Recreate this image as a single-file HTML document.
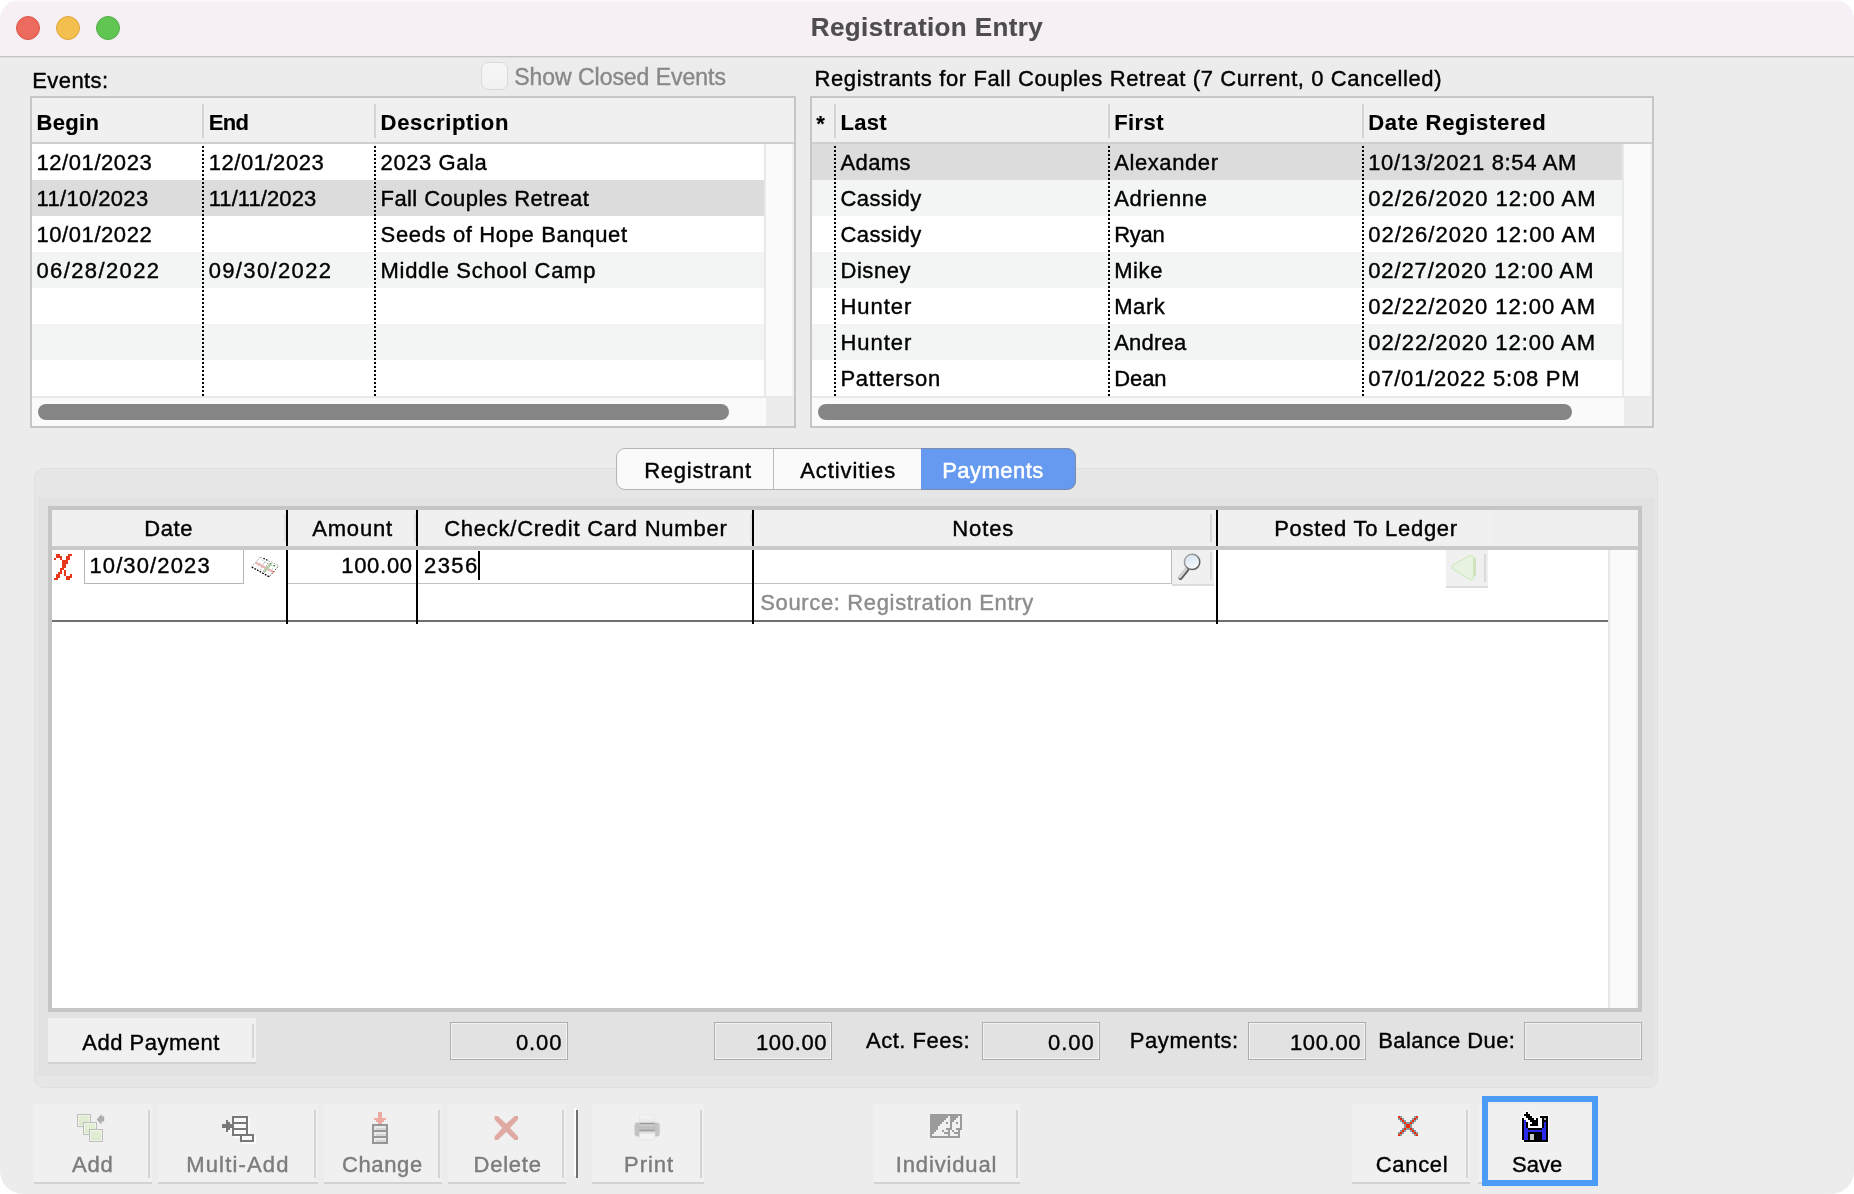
<!DOCTYPE html>
<html lang="en">
<head>
<meta charset="utf-8">
<title>Registration Entry</title>
<style>
*{box-sizing:border-box;margin:0;padding:0}
html,body{width:1854px;height:1194px;overflow:hidden;background:#fff}
body{font-family:"Liberation Sans",sans-serif;font-size:22px;color:#000;position:relative}
.a{position:absolute}
.t{white-space:nowrap;-webkit-text-stroke:0.4px currentColor}
.tb{-webkit-text-stroke:0.15px currentColor}
#win{will-change:transform;left:0;top:0;width:1854px;height:1194px;border-radius:20px 20px 23px 23px;background:#ececec;overflow:hidden}
.tl{width:24px;height:24px;border-radius:50%;top:16px}
.dot{width:2px;background:repeating-linear-gradient(to bottom,transparent 0,transparent 2px,#000 2px,#000 4px)}
.thumb{background:#858585;border-radius:8px;height:16px}
</style>
</head>
<body>
<div id="win" class="a">
<div class="a" style="left:0px;top:0px;width:1854px;height:56px;background:#f6f0f6;"></div>
<div class="a" style="left:0px;top:0px;width:1854px;height:2px;background:linear-gradient(rgba(255,255,255,.85),rgba(255,255,255,0));"></div>
<div class="a" style="left:0px;top:56px;width:1854px;height:1px;background:#c4c4c4;"></div>
<div class="a" style="left:0px;top:57px;width:1854px;height:1px;background:#dedede;"></div>
<div class="a tl" style="left:16px;background:#ec6a5e;border:1px solid #d9574b"></div>
<div class="a tl" style="left:56px;background:#f4bf4f;border:1px solid #dca73c"></div>
<div class="a tl" style="left:96px;background:#61c554;border:1px solid #50ad43"></div>
<div class="a t tb" style="left:810.80px;top:9.59px;font-size:26px;line-height:34px;height:34px;letter-spacing:0.388px;font-weight:bold;color:#4f4c4f;">Registration Entry</div>
<div class="a t" style="left:32.20px;top:65.88px;font-size:22px;line-height:29px;height:29px;letter-spacing:0.433px;">Events:</div>
<div class="a" style="left:480.5px;top:62px;width:27px;height:27.5px;background:linear-gradient(#f6f6f6,#f1f1f1);border:1px solid #d9d9d9;border-radius:7px"></div>
<div class="a t" style="left:514.20px;top:61.73px;font-size:23px;line-height:30px;height:30px;letter-spacing:-0.029px;color:#888888;">Show Closed Events</div>
<div class="a" style="left:30px;top:96px;width:766px;height:332px;background:#fff;border:2px solid #c6c6c6"></div>
<div class="a" style="left:32px;top:98px;width:762px;height:44px;background:#f0f0f0;"></div>
<div class="a" style="left:32px;top:142px;width:762px;height:2px;background:#cfcfcf;"></div>
<div class="a" style="left:32px;top:144px;width:732px;height:36px;background:#fff;"></div>
<div class="a" style="left:32px;top:180px;width:732px;height:36px;background:#dcdcdc;"></div>
<div class="a" style="left:32px;top:216px;width:732px;height:36px;background:#fff;"></div>
<div class="a" style="left:32px;top:252px;width:732px;height:36px;background:#f3f5f5;"></div>
<div class="a" style="left:32px;top:288px;width:732px;height:36px;background:#fff;"></div>
<div class="a" style="left:32px;top:324px;width:732px;height:36px;background:#f3f5f5;"></div>
<div class="a" style="left:32px;top:360px;width:732px;height:36px;background:#fff;"></div>
<div class="a" style="left:202px;top:104px;width:2px;height:34px;background:#d4d4d4;"></div>
<div class="a dot" style="left:202px;top:144px;height:252px"></div>
<div class="a" style="left:374px;top:104px;width:2px;height:34px;background:#d4d4d4;"></div>
<div class="a dot" style="left:374px;top:144px;height:252px"></div>
<div class="a" style="left:764px;top:144px;width:30px;height:253px;background:#fafafa;border-left:2px solid #e9e9e9;border-right:2px solid #f0f0f0"></div>
<div class="a" style="left:32px;top:396px;width:762px;height:30px;background:#fafafa;border-top:2px solid #e9e9e9"></div>
<div class="a" style="left:766px;top:398px;width:28px;height:28px;background:#ececec;"></div>
<div class="a t tb" style="left:36.50px;top:107.58px;font-size:22px;line-height:29px;height:29px;letter-spacing:0.350px;font-weight:bold;">Begin</div>
<div class="a t tb" style="left:208.70px;top:107.58px;font-size:22px;line-height:29px;height:29px;letter-spacing:-0.650px;font-weight:bold;">End</div>
<div class="a t tb" style="left:380.60px;top:107.58px;font-size:22px;line-height:29px;height:29px;letter-spacing:0.680px;font-weight:bold;">Description</div>
<div class="a t" style="left:36.50px;top:147.88px;font-size:22px;line-height:29px;height:29px;letter-spacing:0.567px;">12/01/2023</div>
<div class="a t" style="left:208.70px;top:147.88px;font-size:22px;line-height:29px;height:29px;letter-spacing:0.544px;">12/01/2023</div>
<div class="a t" style="left:380.60px;top:147.88px;font-size:22px;line-height:29px;height:29px;letter-spacing:0.562px;">2023 Gala</div>
<div class="a t" style="left:36.50px;top:183.88px;font-size:22px;line-height:29px;height:29px;letter-spacing:0.356px;">11/10/2023</div>
<div class="a t" style="left:208.70px;top:183.88px;font-size:22px;line-height:29px;height:29px;letter-spacing:0.078px;">11/11/2023</div>
<div class="a t" style="left:380.60px;top:183.88px;font-size:22px;line-height:29px;height:29px;letter-spacing:0.405px;">Fall Couples Retreat</div>
<div class="a t" style="left:36.50px;top:219.88px;font-size:22px;line-height:29px;height:29px;letter-spacing:0.567px;">10/01/2022</div>
<div class="a t" style="left:380.60px;top:219.88px;font-size:22px;line-height:29px;height:29px;letter-spacing:0.640px;">Seeds of Hope Banquet</div>
<div class="a t" style="left:36.50px;top:255.88px;font-size:22px;line-height:29px;height:29px;letter-spacing:1.378px;">06/28/2022</div>
<div class="a t" style="left:208.70px;top:255.88px;font-size:22px;line-height:29px;height:29px;letter-spacing:1.356px;">09/30/2022</div>
<div class="a t" style="left:380.60px;top:255.88px;font-size:22px;line-height:29px;height:29px;letter-spacing:0.694px;">Middle School Camp</div>
<div class="a thumb" style="left:38px;top:404px;width:691px"></div>
<div class="a t" style="left:814.50px;top:63.88px;font-size:22px;line-height:29px;height:29px;letter-spacing:0.607px;">Registrants for Fall Couples Retreat (7 Current, 0 Cancelled)</div>
<div class="a" style="left:810px;top:96px;width:844px;height:332px;background:#fff;border:2px solid #c6c6c6"></div>
<div class="a" style="left:812px;top:98px;width:840px;height:44px;background:#f0f0f0;"></div>
<div class="a" style="left:812px;top:142px;width:840px;height:2px;background:#cfcfcf;"></div>
<div class="a" style="left:812px;top:144px;width:810px;height:36px;background:#dcdcdc;"></div>
<div class="a" style="left:812px;top:180px;width:810px;height:36px;background:#f3f5f5;"></div>
<div class="a" style="left:812px;top:216px;width:810px;height:36px;background:#fff;"></div>
<div class="a" style="left:812px;top:252px;width:810px;height:36px;background:#f3f5f5;"></div>
<div class="a" style="left:812px;top:288px;width:810px;height:36px;background:#fff;"></div>
<div class="a" style="left:812px;top:324px;width:810px;height:36px;background:#f3f5f5;"></div>
<div class="a" style="left:812px;top:360px;width:810px;height:36px;background:#fff;"></div>
<div class="a" style="left:834px;top:104px;width:2px;height:34px;background:#d4d4d4;"></div>
<div class="a dot" style="left:834px;top:144px;height:252px"></div>
<div class="a" style="left:1108px;top:104px;width:2px;height:34px;background:#d4d4d4;"></div>
<div class="a dot" style="left:1108px;top:144px;height:252px"></div>
<div class="a" style="left:1362px;top:104px;width:2px;height:34px;background:#d4d4d4;"></div>
<div class="a dot" style="left:1362px;top:144px;height:252px"></div>
<div class="a" style="left:1622px;top:144px;width:30px;height:253px;background:#fafafa;border-left:2px solid #e9e9e9;border-right:2px solid #f0f0f0"></div>
<div class="a" style="left:812px;top:396px;width:840px;height:30px;background:#fafafa;border-top:2px solid #e9e9e9"></div>
<div class="a" style="left:1624px;top:398px;width:28px;height:28px;background:#ececec;"></div>
<div class="a t tb" style="left:816.20px;top:108.88px;font-size:22px;line-height:29px;height:29px;letter-spacing:0.000px;font-weight:bold;">*</div>
<div class="a t tb" style="left:840.50px;top:107.58px;font-size:22px;line-height:29px;height:29px;letter-spacing:0.300px;font-weight:bold;">Last</div>
<div class="a t tb" style="left:1114.20px;top:107.58px;font-size:22px;line-height:29px;height:29px;letter-spacing:0.425px;font-weight:bold;">First</div>
<div class="a t tb" style="left:1368.20px;top:107.58px;font-size:22px;line-height:29px;height:29px;letter-spacing:0.714px;font-weight:bold;">Date Registered</div>
<div class="a t" style="left:840.50px;top:147.88px;font-size:22px;line-height:29px;height:29px;letter-spacing:0.400px;">Adams</div>
<div class="a t" style="left:1114.20px;top:147.88px;font-size:22px;line-height:29px;height:29px;letter-spacing:0.588px;">Alexander</div>
<div class="a t" style="left:1368.20px;top:147.88px;font-size:22px;line-height:29px;height:29px;letter-spacing:0.659px;">10/13/2021 8:54 AM</div>
<div class="a t" style="left:840.50px;top:183.88px;font-size:22px;line-height:29px;height:29px;letter-spacing:0.417px;">Cassidy</div>
<div class="a t" style="left:1114.20px;top:183.88px;font-size:22px;line-height:29px;height:29px;letter-spacing:0.671px;">Adrienne</div>
<div class="a t" style="left:1368.20px;top:183.88px;font-size:22px;line-height:29px;height:29px;letter-spacing:1.011px;">02/26/2020 12:00 AM</div>
<div class="a t" style="left:840.50px;top:219.88px;font-size:22px;line-height:29px;height:29px;letter-spacing:0.417px;">Cassidy</div>
<div class="a t" style="left:1114.20px;top:219.88px;font-size:22px;line-height:29px;height:29px;letter-spacing:-0.267px;">Ryan</div>
<div class="a t" style="left:1368.20px;top:219.88px;font-size:22px;line-height:29px;height:29px;letter-spacing:1.011px;">02/26/2020 12:00 AM</div>
<div class="a t" style="left:840.50px;top:255.88px;font-size:22px;line-height:29px;height:29px;letter-spacing:0.540px;">Disney</div>
<div class="a t" style="left:1114.20px;top:255.88px;font-size:22px;line-height:29px;height:29px;letter-spacing:0.600px;">Mike</div>
<div class="a t" style="left:1368.20px;top:255.88px;font-size:22px;line-height:29px;height:29px;letter-spacing:0.894px;">02/27/2020 12:00 AM</div>
<div class="a t" style="left:840.50px;top:291.88px;font-size:22px;line-height:29px;height:29px;letter-spacing:0.960px;">Hunter</div>
<div class="a t" style="left:1114.20px;top:291.88px;font-size:22px;line-height:29px;height:29px;letter-spacing:0.567px;">Mark</div>
<div class="a t" style="left:1368.20px;top:291.88px;font-size:22px;line-height:29px;height:29px;letter-spacing:0.983px;">02/22/2020 12:00 AM</div>
<div class="a t" style="left:840.50px;top:327.88px;font-size:22px;line-height:29px;height:29px;letter-spacing:0.960px;">Hunter</div>
<div class="a t" style="left:1114.20px;top:327.88px;font-size:22px;line-height:29px;height:29px;letter-spacing:0.240px;">Andrea</div>
<div class="a t" style="left:1368.20px;top:327.88px;font-size:22px;line-height:29px;height:29px;letter-spacing:0.983px;">02/22/2020 12:00 AM</div>
<div class="a t" style="left:840.50px;top:363.88px;font-size:22px;line-height:29px;height:29px;letter-spacing:0.688px;">Patterson</div>
<div class="a t" style="left:1114.20px;top:363.88px;font-size:22px;line-height:29px;height:29px;letter-spacing:-0.067px;">Dean</div>
<div class="a t" style="left:1368.20px;top:363.88px;font-size:22px;line-height:29px;height:29px;letter-spacing:0.782px;">07/01/2022 5:08 PM</div>
<div class="a thumb" style="left:818px;top:404px;width:754px"></div>
<div class="a" style="left:34px;top:468px;width:1624px;height:620px;background:#e6e6e6;border:1px solid #dfdfdf;border-radius:10px"></div>
<div class="a" style="left:38px;top:498px;width:1616px;height:578px;background:#e2e2e2;"></div>
<div class="a" style="left:616px;top:448px;width:460px;height:42px;background:#fafafa;border:1px solid #b4b4b4;border-radius:9px"></div>
<div class="a" style="left:773px;top:449px;width:1px;height:40px;background:#b9b9b9;"></div>
<div class="a" style="left:921px;top:448px;width:155px;height:42px;background:#659af0;border:1px solid rgba(140,130,120,.55);border-left:none;border-radius:0 9px 9px 0"></div>
<div class="a t" style="left:644.20px;top:455.88px;font-size:22px;line-height:29px;height:29px;letter-spacing:0.744px;">Registrant</div>
<div class="a t" style="left:800.20px;top:455.88px;font-size:22px;line-height:29px;height:29px;letter-spacing:0.911px;">Activities</div>
<div class="a t" style="left:942.20px;top:455.88px;font-size:22px;line-height:29px;height:29px;letter-spacing:0.457px;color:#fff;text-shadow:0 0 1px rgba(255,255,255,.55);">Payments</div>
<div class="a" style="left:48px;top:506px;width:1594px;height:506px;background:#fff;border:4px solid #c5c5c5"></div>
<div class="a" style="left:52px;top:510px;width:1586px;height:36px;background:#f0f0f0;"></div>
<div class="a" style="left:1492px;top:510px;width:146px;height:36px;background:#eeeeee;"></div>
<div class="a" style="left:1608px;top:550px;width:30px;height:458px;background:#fafafa;border-left:2px solid #e8e8e8;border-right:2px solid #f0f0f0"></div>
<div class="a" style="left:284px;top:514px;width:1.5px;height:28px;background:#e3e3e3;"></div>
<div class="a" style="left:414px;top:514px;width:1.5px;height:28px;background:#e3e3e3;"></div>
<div class="a" style="left:750px;top:514px;width:1.5px;height:28px;background:#e3e3e3;"></div>
<div class="a" style="left:1210px;top:514px;width:2px;height:28px;background:#d8d8d8;"></div>
<div class="a" style="left:84px;top:550px;width:160px;height:34px;background:#fff;border:1px solid #b6b6b6;border-top:none"></div>
<div class="a" style="left:288px;top:550px;width:128px;height:34px;background:#fff;border-bottom:1px solid #c2c2c2"></div>
<div class="a" style="left:418px;top:550px;width:334px;height:34px;background:#fff;border-bottom:1px solid #c2c2c2"></div>
<div class="a" style="left:754px;top:550px;width:418px;height:34px;background:#fff;border-bottom:1px solid #c2c2c2;border-right:1px solid #bcbcbc"></div>
<div class="a" style="left:1172px;top:550px;width:42px;height:36px;background:#f0f0f0;border-bottom:2px solid #dcdcdc"></div>
<div class="a" style="left:1210px;top:552px;width:2px;height:28px;background:#dadada;"></div>
<div class="a" style="left:1446px;top:550px;width:42px;height:38px;background:#f0f0f0;border-bottom:2px solid #dcdcdc"></div>
<div class="a" style="left:1484px;top:554px;width:2px;height:28px;background:#dadada;"></div>
<div class="a" style="left:52px;top:620px;width:1556px;height:2px;background:#707070;"></div>
<div class="a" style="left:286px;top:510px;width:2px;height:114px;background:#000;"></div>
<div class="a" style="left:416px;top:510px;width:2px;height:114px;background:#000;"></div>
<div class="a" style="left:752px;top:510px;width:2px;height:114px;background:#000;"></div>
<div class="a" style="left:1216px;top:510px;width:2px;height:114px;background:#000;"></div>
<div class="a" style="left:52px;top:546px;width:1586px;height:4px;background:#c9c9c9;"></div>
<div class="a t" style="left:144.20px;top:514.38px;font-size:22px;line-height:29px;height:29px;letter-spacing:0.633px;">Date</div>
<div class="a t" style="left:312.20px;top:514.38px;font-size:22px;line-height:29px;height:29px;letter-spacing:0.840px;">Amount</div>
<div class="a t" style="left:444.20px;top:514.38px;font-size:22px;line-height:29px;height:29px;letter-spacing:0.748px;">Check/Credit Card Number</div>
<div class="a t" style="left:952.20px;top:514.38px;font-size:22px;line-height:29px;height:29px;letter-spacing:0.925px;">Notes</div>
<div class="a t" style="left:1274.20px;top:514.38px;font-size:22px;line-height:29px;height:29px;letter-spacing:0.727px;">Posted To Ledger</div>
<div class="a t" style="left:89.40px;top:551.38px;font-size:22px;line-height:29px;height:29px;letter-spacing:1.133px;">10/30/2023</div>
<div class="a t" style="left:341.20px;top:551.38px;font-size:22px;line-height:29px;height:29px;letter-spacing:0.720px;">100.00</div>
<div class="a t" style="left:423.90px;top:551.38px;font-size:22px;line-height:29px;height:29px;letter-spacing:1.500px;">2356</div>
<div class="a" style="left:478px;top:551px;width:2px;height:29px;background:#000;"></div>
<div class="a t" style="left:760.20px;top:587.88px;font-size:22px;line-height:29px;height:29px;letter-spacing:0.648px;color:#8c8c8c;">Source: Registration Entry</div>
<div class="a" style="left:48px;top:1018px;width:208px;height:46px;background:#f0f0f0;border-bottom:2px solid #d2d2d2"></div>
<div class="a" style="left:252px;top:1024px;width:2px;height:34px;background:#d6d6d6;"></div>
<div class="a t" style="left:82.20px;top:1027.88px;font-size:22px;line-height:29px;height:29px;letter-spacing:0.520px;">Add Payment</div>
<div class="a" style="left:450px;top:1022px;width:118px;height:38px;background:#e2e2e2;border:1px solid #adadad;box-shadow:inset 0 0 0 1px #f3f3f3"></div>
<div class="a t" style="left:515.90px;top:1027.88px;font-size:22px;line-height:29px;height:29px;letter-spacing:0.933px;">0.00</div>
<div class="a" style="left:714px;top:1022px;width:118px;height:38px;background:#e2e2e2;border:1px solid #adadad;box-shadow:inset 0 0 0 1px #f3f3f3"></div>
<div class="a t" style="left:755.90px;top:1027.88px;font-size:22px;line-height:29px;height:29px;letter-spacing:0.680px;">100.00</div>
<div class="a t" style="left:866.00px;top:1026.38px;font-size:22px;line-height:29px;height:29px;letter-spacing:0.511px;">Act. Fees:</div>
<div class="a" style="left:982px;top:1022px;width:118px;height:38px;background:#e2e2e2;border:1px solid #adadad;box-shadow:inset 0 0 0 1px #f3f3f3"></div>
<div class="a t" style="left:1048.00px;top:1027.88px;font-size:22px;line-height:29px;height:29px;letter-spacing:0.933px;">0.00</div>
<div class="a t" style="left:1129.80px;top:1026.38px;font-size:22px;line-height:29px;height:29px;letter-spacing:0.563px;">Payments:</div>
<div class="a" style="left:1248px;top:1022px;width:118px;height:38px;background:#e2e2e2;border:1px solid #adadad;box-shadow:inset 0 0 0 1px #f3f3f3"></div>
<div class="a t" style="left:1289.90px;top:1027.88px;font-size:22px;line-height:29px;height:29px;letter-spacing:0.680px;">100.00</div>
<div class="a t" style="left:1378.20px;top:1026.38px;font-size:22px;line-height:29px;height:29px;letter-spacing:0.427px;">Balance Due:</div>
<div class="a" style="left:1524px;top:1022px;width:118px;height:38px;background:#e2e2e2;border:1px solid #adadad;box-shadow:inset 0 0 0 1px #f3f3f3"></div>
<div class="a" style="left:34px;top:1104px;width:118px;height:80px;background:#f0f0f0;border-bottom:2px solid #d2d2d2"></div>
<div class="a" style="left:148px;top:1110px;width:2px;height:68px;background:#d4d4d4;"></div>
<div class="a t" style="left:72.10px;top:1149.88px;font-size:22px;line-height:29px;height:29px;letter-spacing:0.750px;color:#7c7c7c;">Add</div>
<div class="a" style="left:158px;top:1104px;width:160px;height:80px;background:#f0f0f0;border-bottom:2px solid #d2d2d2"></div>
<div class="a" style="left:314px;top:1110px;width:2px;height:68px;background:#d4d4d4;"></div>
<div class="a t" style="left:186.20px;top:1149.88px;font-size:22px;line-height:29px;height:29px;letter-spacing:1.175px;color:#7c7c7c;">Multi-Add</div>
<div class="a" style="left:324px;top:1104px;width:118px;height:80px;background:#f0f0f0;border-bottom:2px solid #d2d2d2"></div>
<div class="a" style="left:438px;top:1110px;width:2px;height:68px;background:#d4d4d4;"></div>
<div class="a t" style="left:342.00px;top:1149.88px;font-size:22px;line-height:29px;height:29px;letter-spacing:0.620px;color:#7c7c7c;">Change</div>
<div class="a" style="left:448px;top:1104px;width:118px;height:80px;background:#f0f0f0;border-bottom:2px solid #d2d2d2"></div>
<div class="a" style="left:562px;top:1110px;width:2px;height:68px;background:#d4d4d4;"></div>
<div class="a t" style="left:473.60px;top:1149.88px;font-size:22px;line-height:29px;height:29px;letter-spacing:0.740px;color:#7c7c7c;">Delete</div>
<div class="a" style="left:574px;top:1108px;width:2px;height:68px;background:#fff;"></div>
<div class="a" style="left:576px;top:1110px;width:2px;height:68px;background:#707070;"></div>
<div class="a" style="left:592px;top:1104px;width:112px;height:80px;background:#f0f0f0;border-bottom:2px solid #d2d2d2"></div>
<div class="a" style="left:700px;top:1110px;width:2px;height:68px;background:#d4d4d4;"></div>
<div class="a t" style="left:624.00px;top:1149.88px;font-size:22px;line-height:29px;height:29px;letter-spacing:0.975px;color:#7c7c7c;">Print</div>
<div class="a" style="left:874px;top:1104px;width:146px;height:80px;background:#f0f0f0;border-bottom:2px solid #d2d2d2"></div>
<div class="a" style="left:1016px;top:1110px;width:2px;height:68px;background:#d4d4d4;"></div>
<div class="a t" style="left:895.80px;top:1149.88px;font-size:22px;line-height:29px;height:29px;letter-spacing:0.844px;color:#7c7c7c;">Individual</div>
<div class="a" style="left:1352px;top:1104px;width:118px;height:80px;background:#f0f0f0;border-bottom:2px solid #d2d2d2"></div>
<div class="a" style="left:1466px;top:1110px;width:2px;height:68px;background:#d4d4d4;"></div>
<div class="a t" style="left:1375.80px;top:1149.88px;font-size:22px;line-height:29px;height:29px;letter-spacing:0.660px;color:#000;">Cancel</div>
<div class="a" style="left:1478px;top:1104px;width:118px;height:80px;background:#f0f0f0;border-bottom:2px solid #d2d2d2"></div>
<div class="a" style="left:1592px;top:1110px;width:2px;height:68px;background:#d4d4d4;"></div>
<div class="a t" style="left:1512.10px;top:1149.88px;font-size:22px;line-height:29px;height:29px;letter-spacing:0.033px;color:#000;">Save</div>
<div class="a" style="left:1482px;top:1096px;width:116px;height:90px;background:transparent;border:6px solid #4b9cf5"></div>
<svg class="a" style="left:0;top:0" width="1854" height="1194" viewBox="0 0 1854 1194"><g shape-rendering="crispEdges"><rect x="56" y="554" width="4" height="2" fill="#e8381c"/><rect x="68" y="554" width="4" height="2" fill="#e8381c"/><rect x="56" y="556" width="6" height="2" fill="#e8381c"/><rect x="66" y="556" width="4" height="2" fill="#e8381c"/><rect x="54" y="558" width="2" height="2" fill="#e8381c"/><rect x="60" y="558" width="2" height="2" fill="#e8381c"/><rect x="66" y="558" width="4" height="2" fill="#e8381c"/><rect x="62" y="560" width="6" height="2" fill="#e8381c"/><rect x="62" y="562" width="6" height="2" fill="#e8381c"/><rect x="62" y="564" width="4" height="2" fill="#e8381c"/><rect x="62" y="566" width="4" height="2" fill="#e8381c"/><rect x="60" y="568" width="4" height="2" fill="#e8381c"/><rect x="60" y="570" width="2" height="2" fill="#e8381c"/><rect x="64" y="570" width="2" height="2" fill="#e8381c"/><rect x="58" y="572" width="4" height="2" fill="#e8381c"/><rect x="64" y="572" width="2" height="2" fill="#e8381c"/><rect x="56" y="574" width="4" height="2" fill="#e8381c"/><rect x="64" y="574" width="2" height="2" fill="#e8381c"/><rect x="70" y="574" width="2" height="2" fill="#e8381c"/><rect x="56" y="576" width="4" height="2" fill="#e8381c"/><rect x="66" y="576" width="6" height="2" fill="#e8381c"/><rect x="54" y="578" width="4" height="2" fill="#e8381c"/><rect x="66" y="578" width="4" height="2" fill="#e8381c"/></g>
<g>
<polygon points="260.4,557.2 278.8,565.6 269.2,576.6 251.4,566.6" fill="#fff"/>
<line x1="260.4" y1="557.2" x2="251.4" y2="566.6" stroke="#8a8a8a" stroke-width="0.9" stroke-dasharray="1.6 1.4"/>
<line x1="260.4" y1="557.2" x2="278.8" y2="565.6" stroke="#8a8a8a" stroke-width="0.9" stroke-dasharray="1.4 1.6"/>
<line x1="251.8" y1="567" x2="269.2" y2="576.8" stroke="#000" stroke-width="1.35" stroke-dasharray="1.7 1.3"/>
<line x1="269.6" y1="576.4" x2="278.6" y2="566" stroke="#222" stroke-width="1" stroke-dasharray="1.3 1.6"/>
<line x1="263.4" y1="558.2" x2="267.6" y2="560.2" stroke="#222" stroke-width="1.2" stroke-dasharray="1.6 1.4"/>
<line x1="260.5" y1="563" x2="256" y2="568.5" stroke="#999" stroke-width="0.8" stroke-dasharray="1 2.4"/>
<line x1="264.6" y1="562" x2="260" y2="570.5" stroke="#777" stroke-width="0.8" stroke-dasharray="1 1"/>
<line x1="268" y1="563" x2="263" y2="572" stroke="#666" stroke-width="0.8" stroke-dasharray="1 1"/>
<line x1="274.5" y1="566" x2="268" y2="574.5" stroke="#999" stroke-width="0.8" stroke-dasharray="1 2"/>
<line x1="255.6" y1="562.6" x2="273.8" y2="572.2" stroke="#e8b2b2" stroke-width="2.2"/>
<line x1="270.8" y1="563.8" x2="263.8" y2="572.4" stroke="#b2cca6" stroke-width="2.5"/>
<line x1="261.5" y1="560" x2="274" y2="566.5" stroke="#a8c8a8" stroke-width="0.7" stroke-dasharray="2 1.5"/>
<rect x="273.4" y="565" width="1.6" height="1.2" fill="#3a8a3a"/>
<rect x="270" y="563" width="1.4" height="1.2" fill="#4c8c4c"/>
<rect x="272.8" y="571.2" width="1.4" height="1.2" fill="#c85050"/>
</g>
<defs><linearGradient id="lens" x1="0" y1="0" x2="0.3" y2="1"><stop offset="0" stop-color="#d2e2f2"/><stop offset="0.45" stop-color="#e2ecf6"/><stop offset="1" stop-color="#f6f8fb"/></linearGradient>
<linearGradient id="rim" x1="0" y1="0" x2="1" y2="1"><stop offset="0" stop-color="#b8b8b8"/><stop offset="1" stop-color="#4a4a4a"/></linearGradient></defs>
<g>
<line x1="1187.2" y1="569.6" x2="1180.4" y2="577.8" stroke="#5a5a5a" stroke-width="4.2" stroke-linecap="round"/>
<line x1="1186.4" y1="569" x2="1179.8" y2="577.2" stroke="#d4d4d4" stroke-width="2.6" stroke-linecap="round"/>
<circle cx="1192.1" cy="561.9" r="7.7" fill="url(#lens)" stroke="url(#rim)" stroke-width="1.5"/>
</g>
<g>
<polygon points="1473,558 1476,558.4 1476,575.6 1473,577" fill="#d2e0c4"/>
<polygon points="1452.2,565.2 1469.6,555.6 1472.4,555.6 1473.6,557 1473.6,578 1472.4,579.6 1470,579.8 1452.2,568.6" fill="#e7f2e1" stroke="#c4e8b0" stroke-width="0.9" stroke-linejoin="round"/>
</g>
<defs><linearGradient id="gsq" x1="0" y1="0" x2="0" y2="1"><stop offset="0" stop-color="#e2eed4"/><stop offset="0.7" stop-color="#e0ecd2"/><stop offset="1" stop-color="#d6e4c8"/></linearGradient></defs>
<g shape-rendering="crispEdges"><rect x="77" y="1114" width="14" height="13" fill="#bdbdbd"/><rect x="78" y="1115" width="12" height="11" fill="#eff6e8"/><rect x="79" y="1116" width="10" height="9" fill="url(#gsq)"/><rect x="83" y="1122" width="14" height="13" fill="#bdbdbd"/><rect x="84" y="1123" width="12" height="11" fill="#eff6e8"/><rect x="85" y="1124" width="10" height="9" fill="url(#gsq)"/><rect x="89" y="1129" width="14" height="13" fill="#bdbdbd"/><rect x="90" y="1130" width="12" height="11" fill="#eff6e8"/><rect x="91" y="1131" width="10" height="9" fill="url(#gsq)"/></g>
<polygon points="96.6,1119.5 101.6,1114 101.6,1116.2 104.2,1116.2 104.2,1121.6 101.6,1121.6 101.6,1124.8" fill="#adadad"/>
<g shape-rendering="crispEdges"><rect x="234" y="1118" width="16" height="20" fill="#fcfcfc"/><rect x="242" y="1136" width="14" height="8" fill="#fcfcfc"/><rect x="224" y="1126" width="4" height="4" fill="#f8f8f8"/><rect x="228" y="1128" width="4" height="6" fill="#f8f8f8"/><rect x="232" y="1116" width="16" height="20" fill="#787878"/><rect x="234" y="1118" width="12" height="4" fill="#fbfbfb"/><rect x="234" y="1124" width="12" height="4" fill="#fbfbfb"/><rect x="234" y="1130" width="12" height="4" fill="#fbfbfb"/><rect x="240" y="1134" width="14" height="8" fill="#787878"/><rect x="242" y="1136" width="10" height="4" fill="#fbfbfb"/><rect x="222" y="1124" width="10" height="4" fill="#787878"/><rect x="226" y="1120" width="2" height="12" fill="#787878"/><rect x="228" y="1122" width="2" height="8" fill="#787878"/></g>
<g shape-rendering="crispEdges"><rect x="378" y="1112" width="4" height="12" fill="#ebaaa2"/><rect x="374" y="1118" width="12" height="2" fill="#ebaaa2"/><rect x="376" y="1120" width="8" height="2" fill="#ebaaa2"/><rect x="372" y="1124" width="16" height="20" fill="#969696"/><rect x="374" y="1126" width="12" height="4" fill="#e9e9e9"/><rect x="376" y="1128" width="10" height="2" fill="#d6d6d6"/><rect x="374" y="1132" width="12" height="4" fill="#e9e9e9"/><rect x="376" y="1134" width="10" height="2" fill="#d6d6d6"/><rect x="374" y="1138" width="12" height="4" fill="#e9e9e9"/><rect x="376" y="1140" width="10" height="2" fill="#d6d6d6"/></g>
<polygon points="494.6,1116 497.8,1116 506.2,1123.8 514.6,1116 518,1116 518,1119.4 510,1127.9 518,1136.4 518,1140 514.6,1140 506.2,1131.9 497.8,1140 494.6,1140 494.6,1136.4 502.2,1127.9 494.6,1119.4" fill="#e0aaa4"/>
<defs><linearGradient id="pp" x1="0" y1="0" x2="0" y2="1"><stop offset="0" stop-color="#f6f6f6"/><stop offset="1" stop-color="#e4e4e4"/></linearGradient>
<linearGradient id="pb" x1="0" y1="0" x2="1" y2="0"><stop offset="0" stop-color="#c6c6c6"/><stop offset="0.2" stop-color="#c0c0c0"/><stop offset="0.8" stop-color="#c0c0c0"/><stop offset="1" stop-color="#cacaca"/></linearGradient></defs>
<g>
<rect x="639.6" y="1115" width="15.2" height="9" fill="url(#pp)" stroke="#e2e2e2" stroke-width="0.6"/>
<rect x="634.4" y="1122.4" width="25.4" height="14" rx="3" fill="url(#pb)"/>
<rect x="640" y="1123" width="14.4" height="1.4" fill="#9c9c9c"/>
<rect x="640" y="1124.6" width="14.4" height="1" fill="#d8d8d8"/>
<rect x="639.4" y="1129.6" width="15.6" height="2.4" fill="#a2a2a2"/>
<path d="M639.4 1131.8 H655 V1137.6 Q655 1139.8 652.8 1139.8 H641.6 Q639.4 1139.8 639.4 1137.6 Z" fill="#f3f3f3" stroke="#dedede" stroke-width="0.6"/>
<rect x="640" y="1132" width="14.4" height="2" fill="#dcdcdc" opacity="0.7"/>
</g>
<g shape-rendering="crispEdges"><rect x="930" y="1114" width="32" height="2" fill="#9b9b9b"/><rect x="930" y="1116" width="18" height="2" fill="#9b9b9b"/><rect x="950" y="1116" width="8" height="2" fill="#9b9b9b"/><rect x="960" y="1116" width="2" height="2" fill="#9b9b9b"/><rect x="930" y="1118" width="16" height="2" fill="#9b9b9b"/><rect x="950" y="1118" width="6" height="2" fill="#9b9b9b"/><rect x="960" y="1118" width="2" height="2" fill="#9b9b9b"/><rect x="930" y="1120" width="14" height="2" fill="#9b9b9b"/><rect x="950" y="1120" width="4" height="2" fill="#9b9b9b"/><rect x="960" y="1120" width="2" height="2" fill="#9b9b9b"/><rect x="930" y="1122" width="12" height="2" fill="#9b9b9b"/><rect x="946" y="1122" width="2" height="2" fill="#9b9b9b"/><rect x="950" y="1122" width="2" height="2" fill="#9b9b9b"/><rect x="956" y="1122" width="2" height="2" fill="#9b9b9b"/><rect x="960" y="1122" width="2" height="2" fill="#9b9b9b"/><rect x="930" y="1124" width="10" height="2" fill="#9b9b9b"/><rect x="950" y="1124" width="2" height="2" fill="#9b9b9b"/><rect x="960" y="1124" width="2" height="2" fill="#9b9b9b"/><rect x="930" y="1126" width="8" height="2" fill="#9b9b9b"/><rect x="950" y="1126" width="2" height="2" fill="#9b9b9b"/><rect x="960" y="1126" width="2" height="2" fill="#9b9b9b"/><rect x="930" y="1128" width="8" height="2" fill="#9b9b9b"/><rect x="946" y="1128" width="6" height="2" fill="#9b9b9b"/><rect x="956" y="1128" width="6" height="2" fill="#9b9b9b"/><rect x="930" y="1130" width="6" height="2" fill="#9b9b9b"/><rect x="942" y="1130" width="2" height="2" fill="#9b9b9b"/><rect x="948" y="1130" width="2" height="2" fill="#9b9b9b"/><rect x="952" y="1130" width="2" height="2" fill="#9b9b9b"/><rect x="958" y="1130" width="2" height="2" fill="#9b9b9b"/><rect x="930" y="1132" width="4" height="2" fill="#9b9b9b"/><rect x="944" y="1132" width="6" height="2" fill="#9b9b9b"/><rect x="954" y="1132" width="6" height="2" fill="#9b9b9b"/><rect x="930" y="1134" width="2" height="2" fill="#9b9b9b"/><rect x="948" y="1134" width="2" height="2" fill="#9b9b9b"/><rect x="958" y="1134" width="2" height="2" fill="#9b9b9b"/><rect x="930" y="1136" width="30" height="2" fill="#9b9b9b"/></g>
<g shape-rendering="crispEdges"><rect x="1398" y="1116" width="2" height="2" fill="#ee2a0c"/><rect x="1400" y="1116" width="2" height="2" fill="#8c9a9a"/><rect x="1414" y="1116" width="2" height="2" fill="#8c9a9a"/><rect x="1416" y="1116" width="2" height="2" fill="#ee2a0c"/><rect x="1398" y="1118" width="2" height="2" fill="#8c9a9a"/><rect x="1400" y="1118" width="2" height="2" fill="#ee2a0c"/><rect x="1402" y="1118" width="2" height="2" fill="#8c9a9a"/><rect x="1412" y="1118" width="2" height="2" fill="#8c9a9a"/><rect x="1414" y="1118" width="2" height="2" fill="#ee2a0c"/><rect x="1416" y="1118" width="2" height="2" fill="#8c9a9a"/><rect x="1400" y="1120" width="2" height="2" fill="#8c9a9a"/><rect x="1402" y="1120" width="2" height="2" fill="#ee2a0c"/><rect x="1404" y="1120" width="2" height="2" fill="#8c9a9a"/><rect x="1410" y="1120" width="2" height="2" fill="#8c9a9a"/><rect x="1412" y="1120" width="2" height="2" fill="#ee2a0c"/><rect x="1414" y="1120" width="2" height="2" fill="#8c9a9a"/><rect x="1402" y="1122" width="2" height="2" fill="#8c9a9a"/><rect x="1404" y="1122" width="2" height="2" fill="#ee2a0c"/><rect x="1406" y="1122" width="4" height="2" fill="#8c9a9a"/><rect x="1410" y="1122" width="2" height="2" fill="#ee2a0c"/><rect x="1412" y="1122" width="2" height="2" fill="#8c9a9a"/><rect x="1404" y="1124" width="2" height="2" fill="#8c9a9a"/><rect x="1406" y="1124" width="4" height="2" fill="#ee2a0c"/><rect x="1410" y="1124" width="2" height="2" fill="#8c9a9a"/><rect x="1404" y="1126" width="2" height="2" fill="#8c9a9a"/><rect x="1406" y="1126" width="4" height="2" fill="#ee2a0c"/><rect x="1410" y="1126" width="2" height="2" fill="#8c9a9a"/><rect x="1402" y="1128" width="2" height="2" fill="#8c9a9a"/><rect x="1404" y="1128" width="2" height="2" fill="#ee2a0c"/><rect x="1406" y="1128" width="4" height="2" fill="#8c9a9a"/><rect x="1410" y="1128" width="2" height="2" fill="#ee2a0c"/><rect x="1412" y="1128" width="2" height="2" fill="#8c9a9a"/><rect x="1400" y="1130" width="2" height="2" fill="#8c9a9a"/><rect x="1402" y="1130" width="2" height="2" fill="#ee2a0c"/><rect x="1404" y="1130" width="2" height="2" fill="#8c9a9a"/><rect x="1410" y="1130" width="2" height="2" fill="#8c9a9a"/><rect x="1412" y="1130" width="2" height="2" fill="#ee2a0c"/><rect x="1414" y="1130" width="2" height="2" fill="#8c9a9a"/><rect x="1398" y="1132" width="2" height="2" fill="#8c9a9a"/><rect x="1400" y="1132" width="2" height="2" fill="#ee2a0c"/><rect x="1402" y="1132" width="2" height="2" fill="#8c9a9a"/><rect x="1412" y="1132" width="2" height="2" fill="#8c9a9a"/><rect x="1414" y="1132" width="2" height="2" fill="#ee2a0c"/><rect x="1416" y="1132" width="2" height="2" fill="#8c9a9a"/><rect x="1398" y="1134" width="2" height="2" fill="#ee2a0c"/><rect x="1400" y="1134" width="2" height="2" fill="#8c9a9a"/><rect x="1414" y="1134" width="2" height="2" fill="#8c9a9a"/><rect x="1416" y="1134" width="2" height="2" fill="#ee2a0c"/></g>
<rect x="1528" y="1118" width="16" height="10" fill="#fff" shape-rendering="crispEdges"/>
<g shape-rendering="crispEdges"><rect x="1525" y="1111" width="4" height="4" fill="#fff"/><rect x="1523" y="1113" width="4" height="4" fill="#fff"/><rect x="1525" y="1113" width="4" height="4" fill="#fff"/><rect x="1527" y="1113" width="4" height="4" fill="#fff"/><rect x="1525" y="1115" width="4" height="4" fill="#fff"/><rect x="1527" y="1115" width="4" height="4" fill="#fff"/><rect x="1529" y="1115" width="4" height="4" fill="#fff"/><rect x="1539" y="1115" width="4" height="4" fill="#fff"/><rect x="1541" y="1115" width="4" height="4" fill="#fff"/><rect x="1543" y="1115" width="4" height="4" fill="#fff"/><rect x="1545" y="1115" width="4" height="4" fill="#fff"/><rect x="1521" y="1117" width="4" height="4" fill="#fff"/><rect x="1527" y="1117" width="4" height="4" fill="#fff"/><rect x="1529" y="1117" width="4" height="4" fill="#fff"/><rect x="1531" y="1117" width="4" height="4" fill="#fff"/><rect x="1535" y="1117" width="4" height="4" fill="#fff"/><rect x="1541" y="1117" width="4" height="4" fill="#fff"/><rect x="1543" y="1117" width="4" height="4" fill="#fff"/><rect x="1545" y="1117" width="4" height="4" fill="#fff"/><rect x="1521" y="1119" width="4" height="4" fill="#fff"/><rect x="1523" y="1119" width="4" height="4" fill="#fff"/><rect x="1529" y="1119" width="4" height="4" fill="#fff"/><rect x="1531" y="1119" width="4" height="4" fill="#fff"/><rect x="1533" y="1119" width="4" height="4" fill="#fff"/><rect x="1535" y="1119" width="4" height="4" fill="#fff"/><rect x="1541" y="1119" width="4" height="4" fill="#fff"/><rect x="1543" y="1119" width="4" height="4" fill="#fff"/><rect x="1545" y="1119" width="4" height="4" fill="#fff"/><rect x="1521" y="1121" width="4" height="4" fill="#fff"/><rect x="1523" y="1121" width="4" height="4" fill="#fff"/><rect x="1525" y="1121" width="4" height="4" fill="#fff"/><rect x="1529" y="1121" width="4" height="4" fill="#fff"/><rect x="1531" y="1121" width="4" height="4" fill="#fff"/><rect x="1533" y="1121" width="4" height="4" fill="#fff"/><rect x="1535" y="1121" width="4" height="4" fill="#fff"/><rect x="1541" y="1121" width="4" height="4" fill="#fff"/><rect x="1543" y="1121" width="4" height="4" fill="#fff"/><rect x="1545" y="1121" width="4" height="4" fill="#fff"/><rect x="1521" y="1123" width="4" height="4" fill="#fff"/><rect x="1523" y="1123" width="4" height="4" fill="#fff"/><rect x="1525" y="1123" width="4" height="4" fill="#fff"/><rect x="1529" y="1123" width="4" height="4" fill="#fff"/><rect x="1531" y="1123" width="4" height="4" fill="#fff"/><rect x="1533" y="1123" width="4" height="4" fill="#fff"/><rect x="1535" y="1123" width="4" height="4" fill="#fff"/><rect x="1541" y="1123" width="4" height="4" fill="#fff"/><rect x="1543" y="1123" width="4" height="4" fill="#fff"/><rect x="1545" y="1123" width="4" height="4" fill="#fff"/><rect x="1521" y="1125" width="4" height="4" fill="#fff"/><rect x="1523" y="1125" width="4" height="4" fill="#fff"/><rect x="1525" y="1125" width="4" height="4" fill="#fff"/><rect x="1527" y="1125" width="4" height="4" fill="#fff"/><rect x="1529" y="1125" width="4" height="4" fill="#fff"/><rect x="1531" y="1125" width="4" height="4" fill="#fff"/><rect x="1533" y="1125" width="4" height="4" fill="#fff"/><rect x="1535" y="1125" width="4" height="4" fill="#fff"/><rect x="1537" y="1125" width="4" height="4" fill="#fff"/><rect x="1539" y="1125" width="4" height="4" fill="#fff"/><rect x="1541" y="1125" width="4" height="4" fill="#fff"/><rect x="1543" y="1125" width="4" height="4" fill="#fff"/><rect x="1545" y="1125" width="4" height="4" fill="#fff"/><rect x="1521" y="1127" width="4" height="4" fill="#fff"/><rect x="1523" y="1127" width="4" height="4" fill="#fff"/><rect x="1525" y="1127" width="4" height="4" fill="#fff"/><rect x="1527" y="1127" width="4" height="4" fill="#fff"/><rect x="1529" y="1127" width="4" height="4" fill="#fff"/><rect x="1531" y="1127" width="4" height="4" fill="#fff"/><rect x="1533" y="1127" width="4" height="4" fill="#fff"/><rect x="1535" y="1127" width="4" height="4" fill="#fff"/><rect x="1537" y="1127" width="4" height="4" fill="#fff"/><rect x="1539" y="1127" width="4" height="4" fill="#fff"/><rect x="1541" y="1127" width="4" height="4" fill="#fff"/><rect x="1543" y="1127" width="4" height="4" fill="#fff"/><rect x="1545" y="1127" width="4" height="4" fill="#fff"/><rect x="1521" y="1129" width="4" height="4" fill="#fff"/><rect x="1523" y="1129" width="4" height="4" fill="#fff"/><rect x="1525" y="1129" width="4" height="4" fill="#fff"/><rect x="1527" y="1129" width="4" height="4" fill="#fff"/><rect x="1529" y="1129" width="4" height="4" fill="#fff"/><rect x="1531" y="1129" width="4" height="4" fill="#fff"/><rect x="1533" y="1129" width="4" height="4" fill="#fff"/><rect x="1535" y="1129" width="4" height="4" fill="#fff"/><rect x="1537" y="1129" width="4" height="4" fill="#fff"/><rect x="1539" y="1129" width="4" height="4" fill="#fff"/><rect x="1541" y="1129" width="4" height="4" fill="#fff"/><rect x="1543" y="1129" width="4" height="4" fill="#fff"/><rect x="1545" y="1129" width="4" height="4" fill="#fff"/><rect x="1521" y="1131" width="4" height="4" fill="#fff"/><rect x="1523" y="1131" width="4" height="4" fill="#fff"/><rect x="1525" y="1131" width="4" height="4" fill="#fff"/><rect x="1527" y="1131" width="4" height="4" fill="#fff"/><rect x="1529" y="1131" width="4" height="4" fill="#fff"/><rect x="1531" y="1131" width="4" height="4" fill="#fff"/><rect x="1533" y="1131" width="4" height="4" fill="#fff"/><rect x="1535" y="1131" width="4" height="4" fill="#fff"/><rect x="1537" y="1131" width="4" height="4" fill="#fff"/><rect x="1539" y="1131" width="4" height="4" fill="#fff"/><rect x="1541" y="1131" width="4" height="4" fill="#fff"/><rect x="1543" y="1131" width="4" height="4" fill="#fff"/><rect x="1545" y="1131" width="4" height="4" fill="#fff"/><rect x="1521" y="1133" width="4" height="4" fill="#fff"/><rect x="1523" y="1133" width="4" height="4" fill="#fff"/><rect x="1525" y="1133" width="4" height="4" fill="#fff"/><rect x="1527" y="1133" width="4" height="4" fill="#fff"/><rect x="1529" y="1133" width="4" height="4" fill="#fff"/><rect x="1531" y="1133" width="4" height="4" fill="#fff"/><rect x="1533" y="1133" width="4" height="4" fill="#fff"/><rect x="1535" y="1133" width="4" height="4" fill="#fff"/><rect x="1537" y="1133" width="4" height="4" fill="#fff"/><rect x="1539" y="1133" width="4" height="4" fill="#fff"/><rect x="1541" y="1133" width="4" height="4" fill="#fff"/><rect x="1543" y="1133" width="4" height="4" fill="#fff"/><rect x="1545" y="1133" width="4" height="4" fill="#fff"/><rect x="1521" y="1135" width="4" height="4" fill="#fff"/><rect x="1523" y="1135" width="4" height="4" fill="#fff"/><rect x="1525" y="1135" width="4" height="4" fill="#fff"/><rect x="1527" y="1135" width="4" height="4" fill="#fff"/><rect x="1529" y="1135" width="4" height="4" fill="#fff"/><rect x="1531" y="1135" width="4" height="4" fill="#fff"/><rect x="1533" y="1135" width="4" height="4" fill="#fff"/><rect x="1535" y="1135" width="4" height="4" fill="#fff"/><rect x="1537" y="1135" width="4" height="4" fill="#fff"/><rect x="1539" y="1135" width="4" height="4" fill="#fff"/><rect x="1541" y="1135" width="4" height="4" fill="#fff"/><rect x="1543" y="1135" width="4" height="4" fill="#fff"/><rect x="1545" y="1135" width="4" height="4" fill="#fff"/><rect x="1521" y="1137" width="4" height="4" fill="#fff"/><rect x="1523" y="1137" width="4" height="4" fill="#fff"/><rect x="1525" y="1137" width="4" height="4" fill="#fff"/><rect x="1527" y="1137" width="4" height="4" fill="#fff"/><rect x="1529" y="1137" width="4" height="4" fill="#fff"/><rect x="1531" y="1137" width="4" height="4" fill="#fff"/><rect x="1533" y="1137" width="4" height="4" fill="#fff"/><rect x="1535" y="1137" width="4" height="4" fill="#fff"/><rect x="1537" y="1137" width="4" height="4" fill="#fff"/><rect x="1539" y="1137" width="4" height="4" fill="#fff"/><rect x="1541" y="1137" width="4" height="4" fill="#fff"/><rect x="1543" y="1137" width="4" height="4" fill="#fff"/><rect x="1545" y="1137" width="4" height="4" fill="#fff"/><rect x="1523" y="1139" width="4" height="4" fill="#fff"/><rect x="1525" y="1139" width="4" height="4" fill="#fff"/><rect x="1527" y="1139" width="4" height="4" fill="#fff"/><rect x="1529" y="1139" width="4" height="4" fill="#fff"/><rect x="1531" y="1139" width="4" height="4" fill="#fff"/><rect x="1533" y="1139" width="4" height="4" fill="#fff"/><rect x="1535" y="1139" width="4" height="4" fill="#fff"/><rect x="1537" y="1139" width="4" height="4" fill="#fff"/><rect x="1539" y="1139" width="4" height="4" fill="#fff"/><rect x="1541" y="1139" width="4" height="4" fill="#fff"/><rect x="1543" y="1139" width="4" height="4" fill="#fff"/><rect x="1545" y="1139" width="4" height="4" fill="#fff"/><rect x="1526" y="1112" width="2" height="2" fill="#000"/><rect x="1524" y="1114" width="6" height="2" fill="#000"/><rect x="1526" y="1116" width="6" height="2" fill="#000"/><rect x="1540" y="1116" width="8" height="2" fill="#000"/><rect x="1522" y="1118" width="2" height="2" fill="#000"/><rect x="1528" y="1118" width="6" height="2" fill="#000"/><rect x="1536" y="1118" width="2" height="2" fill="#000"/><rect x="1542" y="1118" width="2" height="2" fill="#000"/><rect x="1544" y="1118" width="2" height="2" fill="#b4b4b4"/><rect x="1546" y="1118" width="2" height="2" fill="#000"/><rect x="1522" y="1120" width="2" height="2" fill="#000"/><rect x="1524" y="1120" width="2" height="2" fill="#2b2beb"/><rect x="1530" y="1120" width="8" height="2" fill="#000"/><rect x="1542" y="1120" width="6" height="2" fill="#000"/><rect x="1522" y="1122" width="2" height="2" fill="#000"/><rect x="1524" y="1122" width="2" height="2" fill="#2b2beb"/><rect x="1526" y="1122" width="2" height="2" fill="#000"/><rect x="1530" y="1122" width="2" height="2" fill="#fff"/><rect x="1532" y="1122" width="6" height="2" fill="#000"/><rect x="1542" y="1122" width="2" height="2" fill="#000"/><rect x="1544" y="1122" width="2" height="2" fill="#2b2beb"/><rect x="1546" y="1122" width="2" height="2" fill="#000"/><rect x="1522" y="1124" width="2" height="2" fill="#000"/><rect x="1524" y="1124" width="2" height="2" fill="#2b2beb"/><rect x="1526" y="1124" width="2" height="2" fill="#000"/><rect x="1530" y="1124" width="8" height="2" fill="#000"/><rect x="1542" y="1124" width="2" height="2" fill="#000"/><rect x="1544" y="1124" width="2" height="2" fill="#2b2beb"/><rect x="1546" y="1124" width="2" height="2" fill="#000"/><rect x="1522" y="1126" width="2" height="2" fill="#000"/><rect x="1524" y="1126" width="2" height="2" fill="#2b2beb"/><rect x="1526" y="1126" width="2" height="2" fill="#000"/><rect x="1528" y="1126" width="14" height="2" fill="#fff"/><rect x="1542" y="1126" width="2" height="2" fill="#000"/><rect x="1544" y="1126" width="2" height="2" fill="#2b2beb"/><rect x="1546" y="1126" width="2" height="2" fill="#000"/><rect x="1522" y="1128" width="2" height="2" fill="#000"/><rect x="1524" y="1128" width="4" height="2" fill="#2b2beb"/><rect x="1528" y="1128" width="14" height="2" fill="#000"/><rect x="1542" y="1128" width="4" height="2" fill="#2b2beb"/><rect x="1546" y="1128" width="2" height="2" fill="#000"/><rect x="1522" y="1130" width="2" height="2" fill="#000"/><rect x="1524" y="1130" width="22" height="2" fill="#2b2beb"/><rect x="1546" y="1130" width="2" height="2" fill="#000"/><rect x="1522" y="1132" width="2" height="2" fill="#000"/><rect x="1524" y="1132" width="4" height="2" fill="#2b2beb"/><rect x="1528" y="1132" width="14" height="2" fill="#000"/><rect x="1542" y="1132" width="4" height="2" fill="#2b2beb"/><rect x="1546" y="1132" width="2" height="2" fill="#000"/><rect x="1522" y="1134" width="2" height="2" fill="#000"/><rect x="1524" y="1134" width="4" height="2" fill="#2b2beb"/><rect x="1528" y="1134" width="2" height="2" fill="#000"/><rect x="1530" y="1134" width="4" height="2" fill="#c8c8c8"/><rect x="1534" y="1134" width="8" height="2" fill="#000"/><rect x="1542" y="1134" width="4" height="2" fill="#2b2beb"/><rect x="1546" y="1134" width="2" height="2" fill="#000"/><rect x="1522" y="1136" width="2" height="2" fill="#000"/><rect x="1524" y="1136" width="4" height="2" fill="#2b2beb"/><rect x="1528" y="1136" width="2" height="2" fill="#000"/><rect x="1530" y="1136" width="4" height="2" fill="#c8c8c8"/><rect x="1534" y="1136" width="8" height="2" fill="#000"/><rect x="1542" y="1136" width="4" height="2" fill="#2b2beb"/><rect x="1546" y="1136" width="2" height="2" fill="#000"/><rect x="1522" y="1138" width="2" height="2" fill="#000"/><rect x="1524" y="1138" width="4" height="2" fill="#2b2beb"/><rect x="1528" y="1138" width="2" height="2" fill="#000"/><rect x="1530" y="1138" width="4" height="2" fill="#c8c8c8"/><rect x="1534" y="1138" width="8" height="2" fill="#000"/><rect x="1542" y="1138" width="4" height="2" fill="#2b2beb"/><rect x="1546" y="1138" width="2" height="2" fill="#000"/><rect x="1524" y="1140" width="24" height="2" fill="#000"/></g></svg>
</div>
</body>
</html>
